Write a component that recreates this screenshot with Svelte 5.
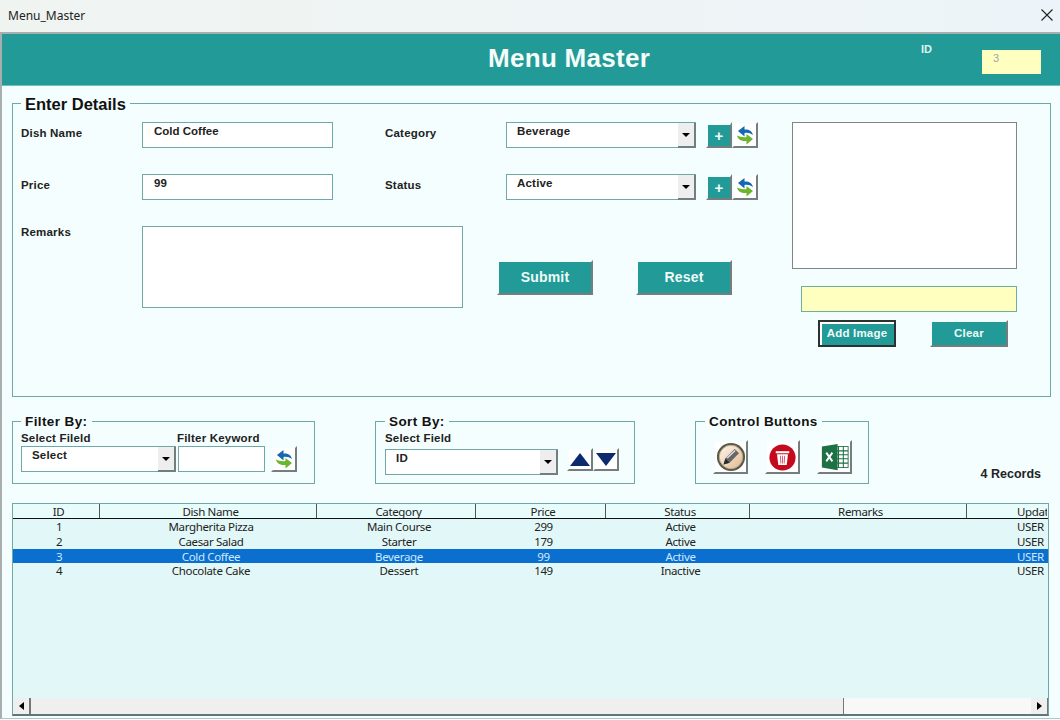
<script>
	const columns = [
		{ label: 'ID', width: 87 },
		{ label: 'Dish Name', width: 217 },
		{ label: 'Category', width: 159 },
		{ label: 'Price', width: 130 },
		{ label: 'Status', width: 144 },
		{ label: 'Remarks', width: 217 },
		{ label: 'Updated By', width: 80 },
	]

	const rows = [
		{ id: 1, dish: 'Margherita Pizza', category: 'Main Course', price: 299, status: 'Active', remarks: '', user: 'USER' },
		{ id: 2, dish: 'Caesar Salad', category: 'Starter', price: 179, status: 'Active', remarks: '', user: 'USER' },
		{ id: 3, dish: 'Cold Coffee', category: 'Beverage', price: 99, status: 'Active', remarks: '', user: 'USER' },
		{ id: 4, dish: 'Chocolate Cake', category: 'Dessert', price: 149, status: 'Inactive', remarks: '', user: 'USER' },
	]

	let selectedId = $state(3)
</script>

{#snippet refreshIcon()}
	<svg viewBox="0 0 20 20" width="20" height="20" aria-hidden="true">
		<path d="M3 6 L9.500 1 V4.500 C13 4 17 5.500 18 10 C15 8 12.500 7.500 9.500 8 V11.500 Z" fill="#1268b3" />
		<path d="M18 14 L11.500 19.500 V16 C7 16.500 3 15 2 10.500 C5 12 8.500 12.500 11.500 12 V9 Z" fill="#6cb52d" />
	</svg>
{/snippet}

{#snippet combo(value, width)}
	<div class="combo" style:width="{width}px">
		<input class="combo-value" {value} readonly />
		<button class="combo-arrow" aria-label="Open list"><i></i></button>
	</div>
{/snippet}

{#snippet addButtons()}
	<div class="add-buttons">
		<button class="bevel teal plus">+</button>
		<button class="bevel icon-small" aria-label="Refresh">{@render refreshIcon()}</button>
	</div>
{/snippet}

<div class="window">
	<div class="titlebar">
		<span>Menu_Master</span>
		<svg class="close" viewBox="0 0 12 12" width="12" height="12" aria-hidden="true">
			<path d="M.5 .5 L11.500 11.500 M11.500 .5 L.5 11.500" stroke="#222" stroke-width="1.100" fill="none" />
		</svg>
	</div>

	<header class="header">
		<h1>Menu Master</h1>
		<span class="id-label">ID</span>
		<input class="id-box" value="3" readonly />
	</header>

	<main class="main">
		<fieldset class="group details">
			<legend class="big">Enter Details</legend>
			<div class="details-body">
				<div class="form">
					<div class="form-row">
						<span class="label">Dish Name</span>
						<input class="text short" value="Cold Coffee" readonly />
						<span class="label second">Category</span>
						{@render combo('Beverage', 190)}
						{@render addButtons()}
					</div>
					<div class="form-row">
						<span class="label">Price</span>
						<input class="text short" value="99" readonly />
						<span class="label second">Status</span>
						{@render combo('Active', 190)}
						{@render addButtons()}
					</div>
					<div class="form-row">
						<span class="label top">Remarks</span>
						<textarea class="remarks" readonly></textarea>
						<div class="actions">
							<button class="bevel teal action">Submit</button>
							<button class="bevel teal action">Reset</button>
						</div>
					</div>
				</div>
				<div class="image-col">
					<div class="image-box"></div>
					<div class="image-path"></div>
					<div class="image-buttons">
						<button class="teal small focused">Add Image</button>
						<button class="bevel teal small">Clear</button>
					</div>
				</div>
			</div>
		</fieldset>

		<div class="tools">
			<fieldset class="group filter">
				<legend>Filter By:</legend>
				<div class="tool-labels">
					<span class="tool-label field">Select Fileld</span>
					<span class="tool-label">Filter Keyword</span>
				</div>
				<div class="tool-row">
					{@render combo('Select', 155)}
					<input class="keyword" readonly />
					<button class="bevel icon-small filter-refresh" aria-label="Refresh">{@render refreshIcon()}</button>
				</div>
			</fieldset>

			<fieldset class="group sort">
				<legend>Sort By:</legend>
				<span class="tool-label">Select Field</span>
				<div class="tool-row sort-row">
					{@render combo('ID', 173)}
					<div class="sort-buttons">
						<button class="bevel sort-btn" aria-label="Sort ascending"><i class="up"></i></button>
						<button class="bevel sort-btn" aria-label="Sort descending"><i class="down"></i></button>
					</div>
				</div>
			</fieldset>

			<fieldset class="group control">
				<legend>Control Buttons</legend>
				<div class="control-row">
					<button class="bevel icon-big" aria-label="Edit">
						<svg viewBox="0 0 32 32" width="30" height="30" aria-hidden="true">
							<defs>
								<linearGradient id="tan" x1="0" y1="0" x2="1" y2="1">
									<stop offset="0" stop-color="#fff8ec" />
									<stop offset="1" stop-color="#e2b88e" />
								</linearGradient>
							</defs>
							<circle cx="16" cy="16" r="15" fill="#5a5847" />
							<circle cx="16" cy="16" r="12.500" fill="url(#tan)" stroke="#b5ab90" />
							<path d="M8 24 L10 17.500 L20 7.500 L24.500 12 L14.500 22 Z" fill="#66676b" />
							<path d="M8 24 L10 17.500 L14.500 22 Z" fill="#2a2a2a" />
							<path d="M12 17 L20.500 9" stroke="#e4e4e4" stroke-width="1.300" />
						</svg>
					</button>
					<button class="bevel icon-big" aria-label="Delete">
						<svg viewBox="0 0 32 32" width="27" height="27" aria-hidden="true">
							<circle cx="16" cy="16" r="15.500" fill="#c60a1e" />
							<path d="M8 8.500 H24 V11 H8 Z" fill="#fff" />
							<path d="M9.500 12 H22.500 L21 25 H11 Z" fill="#fff" />
							<path d="M13.500 14 L14 23 M16 14 V23 M18.500 14 L18 23" stroke="#d9606c" stroke-width="1.200" fill="none" />
						</svg>
					</button>
					<button class="bevel icon-big" aria-label="Export to Excel">
						<svg viewBox="0 0 32 32" width="28" height="28" aria-hidden="true">
							<rect x="12" y="4" width="19" height="24" fill="#fff" stroke="#1e7145" />
							<path d="M12 9 H31 M12 13.500 H31 M12 18 H31 M12 23 H31 M20 4 V28 M25.500 4 V28" stroke="#1e7145" stroke-width="1.200" />
							<path d="M1 4 L19 1 V31 L1 28 Z" fill="#1e7145" />
							<path d="M6 11 L13 21 M13 11 L6 21" stroke="#fff" stroke-width="2.200" />
						</svg>
					</button>
				</div>
			</fieldset>

			<span class="record-count">{rows.length} Records</span>
		</div>

		<div class="grid">
			<div class="grid-view">
				<div class="grid-row grid-head">
					{#each columns as col}
						<span class="cell" style:width="{col.width}px">{col.label}</span>
					{/each}
				</div>
				{#each rows as row}
					<!-- svelte-ignore a11y_click_events_have_key_events, a11y_no_static_element_interactions -->
					<div class="grid-row" class:selected={row.id === selectedId} onclick={() => (selectedId = row.id)}>
						<span class="cell" style:width="{columns[0].width}px">{row.id}</span>
						<span class="cell" style:width="{columns[1].width}px">{row.dish}</span>
						<span class="cell" style:width="{columns[2].width}px">{row.category}</span>
						<span class="cell" style:width="{columns[3].width}px">{row.price}</span>
						<span class="cell" style:width="{columns[4].width}px">{row.status}</span>
						<span class="cell" style:width="{columns[5].width}px">{row.remarks}</span>
						<span class="cell" style:width="{columns[6].width}px">{row.user}</span>
					</div>
				{/each}
			</div>
			<div class="scrollbar">
				<button class="scroll-btn" aria-label="Scroll left"><i class="left"></i></button>
				<div class="scroll-thumb"></div>
				<div class="scroll-track"></div>
				<button class="scroll-btn" aria-label="Scroll right"><i class="right"></i></button>
			</div>
		</div>
	</main>
</div>

<style>
	:global(body) {
		margin: 0;
		background: #f5fefe;
	}

	.window {
		width: 1060px;
		height: 720px;
		display: flex;
		flex-direction: column;
		overflow: hidden;
		font-family: 'Liberation Sans', Arial, sans-serif;
		color: #111;
		background: #f5fefe;
	}

	.titlebar {
		height: 32px;
		flex: none;
		box-sizing: border-box;
		display: flex;
		align-items: center;
		justify-content: space-between;
		padding: 0 7px 2px 8px;
		background: linear-gradient(90deg, #f0f4f1, #edf4f9);
		font-family: 'Noto Sans', sans-serif;
		font-size: 12px;
		color: #222;
	}

	.header {
		height: 54px;
		flex: none;
		box-sizing: border-box;
		display: flex;
		align-items: flex-start;
		padding-left: 486px;
		background: #229a98;
		border-top: 2px solid #a9aeae;
		border-left: 2px solid #a9aeae;
		border-bottom: 1px solid #6fc0be;
	}

	.header h1 {
		margin: 9px 0 0;
		font-size: 26px;
		line-height: 30px;
		font-weight: 700;
		color: #f4fdf8;
		letter-spacing: 0.3px;
	}

	.id-label {
		margin: 8px 0 0 auto;
		font-size: 11px;
		line-height: 14px;
		font-weight: 700;
		color: #dff5f2;
	}

	.id-box {
		width: 59px;
		height: 24px;
		box-sizing: border-box;
		margin: 16px 19px 0 50px;
		padding: 0 0 8px 11px;
		border: 0;
		outline: 0;
		background: #ffffc0;
		color: #a5a5a0;
		font: 11px 'Liberation Sans', sans-serif;
	}

	.main {
		flex: 1;
		min-height: 0;
		display: flex;
		flex-direction: column;
		margin-bottom: 1px;
		padding: 7px 9px 0 10px;
		border-left: 2px solid #a9aeae;
		border-bottom: 1px solid #b5c5c5;
	}

	.group {
		margin: 0;
		min-width: 0;
		box-sizing: border-box;
		border: 1px solid #6fa8a8;
	}

	legend {
		padding: 2px 4px 0;
		font-size: 13.500px;
		line-height: 16px;
		font-weight: 700;
		letter-spacing: 0.4px;
	}

	legend.big {
		font-size: 16.500px;
		line-height: 18px;
		letter-spacing: 0;
	}

	.details {
		height: 304px;
		padding: 9px 8px 0;
	}

	.details-body {
		display: flex;
		gap: 34px;
	}

	.form {
		width: 737px;
		display: flex;
		flex-direction: column;
		gap: 26px;
	}

	.form-row {
		display: flex;
		align-items: flex-start;
	}

	.label {
		width: 121px;
		flex: none;
		padding-top: 4px;
		font-size: 11.500px;
		line-height: 14px;
		font-weight: 700;
		letter-spacing: 0.2px;
		color: #222;
	}

	.label.second {
		margin-left: 52px;
	}

	.label.top {
		padding-top: 0;
		margin-top: -1px;
	}

	input,
	textarea {
		display: block;
		outline: 0;
		border-radius: 0;
	}

	.text {
		box-sizing: border-box;
		height: 26px;
		padding: 0 0 8px 11px;
		background: #fff;
		border: 1px solid #6fa8a8;
		color: #222;
		font: 700 11.500px 'Liberation Sans', sans-serif;
	}

	.short {
		width: 191px;
	}

	.remarks {
		width: 321px;
		height: 82px;
		box-sizing: border-box;
		background: #fff;
		border: 1px solid #6fa8a8;
		resize: none;
		flex: none;
	}

	.combo {
		height: 26px;
		flex: none;
		display: flex;
		box-sizing: border-box;
		background: #fff;
		border: 1px solid #6fa8a8;
		border-right: 0;
	}

	.combo-value {
		flex: 1;
		min-width: 0;
		box-sizing: border-box;
		padding: 0 0 8px 10px;
		border: 0;
		background: transparent;
		color: #222;
		font: 700 11.500px 'Liberation Sans', sans-serif;
		letter-spacing: 0.2px;
	}

	.combo-arrow {
		width: 18px;
		padding: 0;
		margin-bottom: -1px;
		box-sizing: border-box;
		display: flex;
		align-items: center;
		justify-content: center;
		background: #eeeeee;
		border: 0;
		border-right: 2px solid #71807f;
		border-bottom: 2px solid #71807f;
	}

	.combo-arrow i {
		width: 0;
		height: 0;
		border-left: 4px solid transparent;
		border-right: 4px solid transparent;
		border-top: 4px solid #000;
	}

	.add-buttons {
		display: flex;
		margin-left: 10px;
	}

	button {
		font-family: inherit;
		cursor: pointer;
		border-radius: 0;
	}

	.bevel {
		box-sizing: border-box;
		padding: 0;
		display: flex;
		align-items: center;
		justify-content: center;
		background: #fff;
		border-style: solid;
		border-width: 2px;
		border-color: #f5fefe #757d7d #757d7d #f5fefe;
	}

	.teal {
		background: #229a98;
		color: #eefbf7;
		font-weight: 700;
	}

	.plus {
		width: 26px;
		height: 26px;
		font-size: 15px;
		border-top-width: 3px;
	}

	.icon-small {
		width: 26px;
		height: 26px;
	}

	.actions {
		display: flex;
		gap: 43px;
		margin: 34px 0 0 34px;
	}

	.action {
		width: 96px;
		height: 35px;
		padding-bottom: 2px;
		font-size: 14px;
		letter-spacing: 0.2px;
	}

	.image-col {
		display: flex;
		flex-direction: column;
		align-items: flex-end;
		width: 225px;
	}

	.image-box {
		width: 225px;
		height: 147px;
		box-sizing: border-box;
		background: #fff;
		border: 1px solid #808586;
	}

	.image-path {
		width: 216px;
		height: 26px;
		margin-top: 17px;
		box-sizing: border-box;
		background: #ffffc0;
		border: 1px solid #6fb09c;
	}

	.image-buttons {
		width: 216px;
		box-sizing: border-box;
		display: flex;
		gap: 34px;
		margin-top: 8px;
		padding-left: 17px;
	}

	.small {
		width: 78px;
		height: 27px;
		padding-bottom: 2px;
		font-size: 11.500px;
		letter-spacing: 0.2px;
	}

	.focused {
		box-sizing: border-box;
		padding: 0 0 2px;
		border: 2px solid #2c3234;
		box-shadow: inset 2px 2px 0 #fff;
	}

	.tools {
		display: flex;
		margin-top: 15px;
		height: 72px;
		flex: none;
	}

	.filter {
		width: 303px;
		padding: 1px 8px 0;
	}

	.tool-labels {
		display: flex;
	}

	.tool-label {
		display: block;
		font-size: 11.500px;
		line-height: 14px;
		font-weight: 700;
		color: #222;
		letter-spacing: 0.2px;
	}

	.tool-label.field {
		width: 156px;
	}

	.tool-row {
		display: flex;
		margin-top: 1px;
	}

	.keyword {
		width: 87px;
		height: 26px;
		margin-left: 2px;
		box-sizing: border-box;
		background: #fff;
		border: 1px solid #6fa8a8;
	}

	.filter-refresh {
		margin-left: 6px;
	}

	.sort {
		width: 260px;
		margin-left: 60px;
		padding: 1px 9px 0;
	}

	.sort-row {
		margin-top: 4px;
	}

	.sort-buttons {
		display: flex;
		margin: -1px 0 0 9px;
	}

	.sort-btn {
		width: 26px;
		height: 23px;
	}

	.sort-btn i {
		width: 0;
		height: 0;
		border-left: 10px solid transparent;
		border-right: 10px solid transparent;
	}

	.sort-btn .up {
		border-bottom: 13px solid #0c2a6e;
	}

	.sort-btn .down {
		border-top: 13px solid #0c2a6e;
	}

	.control {
		width: 174px;
		margin-left: 60px;
		padding: 0 0 0 9px;
	}

	.control-row {
		display: flex;
		gap: 17px;
		margin: 10px 0 0 8px;
	}

	.icon-big {
		width: 35px;
		height: 34px;
	}

	.record-count {
		margin: auto 10px 2px auto;
		font-size: 12.500px;
		line-height: 15px;
		font-weight: 700;
		color: #222;
	}

	.grid {
		flex: none;
		width: 1037px;
		height: 213px;
		margin-top: 19px;
		box-sizing: border-box;
		display: flex;
		flex-direction: column;
		background: #e2f8f8;
		border: 1px solid #6fa8a8;
		border-bottom: 2px solid #5f7777;
		font-family: 'Noto Sans', sans-serif;
		font-size: 11.500px;
		letter-spacing: -0.35px;
		color: #222;
	}

	.grid-view {
		flex: 1;
		min-height: 0;
		overflow: hidden;
	}

	.grid-row {
		display: flex;
		height: 14.750px;
		line-height: 15px;
	}

	.grid-row.selected {
		background: #0a6fcf;
		color: #cfe9ff;
	}

	.grid-head {
		box-sizing: content-box;
		height: 14px;
		background: #e8fcfc;
		border-bottom: 1px solid #111;
	}

	.grid-head .cell {
		border-right: 1px solid #555;
	}

	.cell {
		flex: none;
		box-sizing: border-box;
		padding-left: 5px;
		text-align: center;
		white-space: nowrap;
		overflow: hidden;
	}

	.cell:last-child {
		text-align: left;
		padding-left: 50px;
		border-right: 0 !important;
	}

	.scrollbar {
		flex: none;
		height: 16px;
		display: flex;
		background: #f8f8f8;
	}

	.scroll-btn {
		width: 17px;
		padding: 0;
		box-sizing: border-box;
		display: flex;
		align-items: center;
		justify-content: center;
		background: #efefef;
		border: 0;
		border-right: 1px solid #777;
	}

	.scroll-btn i {
		width: 0;
		height: 0;
		border-top: 4px solid transparent;
		border-bottom: 4px solid transparent;
	}

	.scroll-btn .left {
		border-right: 5px solid #000;
	}

	.scroll-btn .right {
		border-left: 5px solid #000;
	}

	.scroll-thumb {
		width: 814px;
		box-sizing: border-box;
		background: #efefef;
		border-left: 1px solid #777;
		border-right: 1px solid #777;
	}

	.scroll-track {
		flex: 1;
	}
</style>
